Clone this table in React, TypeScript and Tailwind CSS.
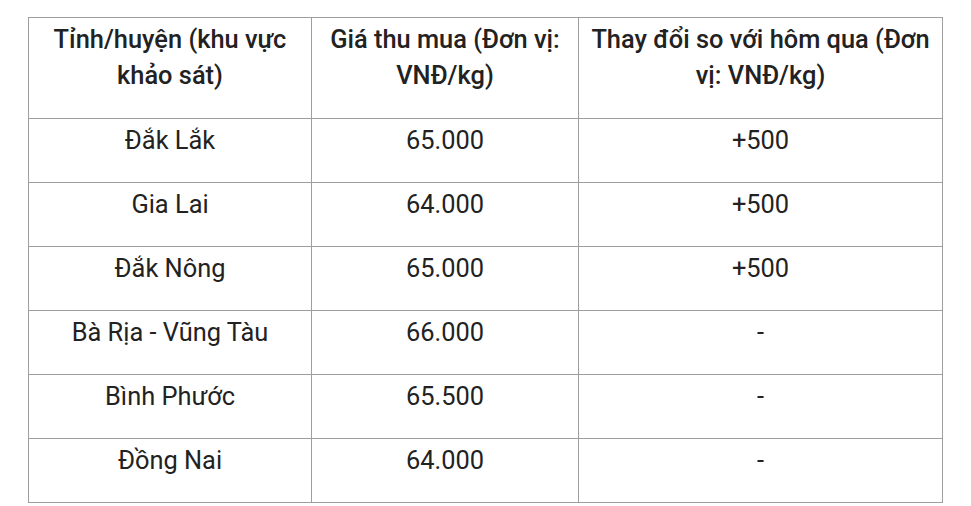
const rows = [
  { area: 'Đắk Lắk', price: '65.000', change: '+500' },
  { area: 'Gia Lai', price: '64.000', change: '+500' },
  { area: 'Đắk Nông', price: '65.000', change: '+500' },
  { area: 'Bà Rịa - Vũng Tàu', price: '66.000', change: '-' },
  { area: 'Bình Phước', price: '65.500', change: '-' },
  { area: 'Đồng Nai', price: '64.000', change: '-' },
];

const cell = 'border border-[#9e9e9e] px-2 pt-[3px] align-top text-center';

export default function App() {
  return (
    <div className="min-h-screen bg-white pt-[17px] pl-[28px] font-['Roboto',sans-serif] text-[25.4px] leading-[36px] text-[#222]">
      <table className="w-[914px] table-fixed border-collapse">
        <colgroup>
          <col className="w-[283px]" />
          <col className="w-[267px]" />
          <col className="w-[364px]" />
        </colgroup>
        <thead>
          <tr>
            <th className={cell + ' pb-[25px] font-medium'}>Tỉnh/huyện (khu vực khảo sát)</th>
            <th className={cell + ' pb-[25px] font-medium'}>Giá thu mua (Đơn vị: VNĐ/kg)</th>
            <th className={cell + ' pb-[25px] font-medium'}>Thay đổi so với hôm qua (Đơn vị: VNĐ/kg)</th>
          </tr>
        </thead>
        <tbody>
          {rows.map((r) => (
            <tr key={r.area}>
              <td className={cell + ' pb-[24px]'}>{r.area}</td>
              <td className={cell + ' pb-[24px]'}>{r.price}</td>
              <td className={cell + ' pb-[24px]'}>{r.change}</td>
            </tr>
          ))}
        </tbody>
      </table>
    </div>
  );
}
